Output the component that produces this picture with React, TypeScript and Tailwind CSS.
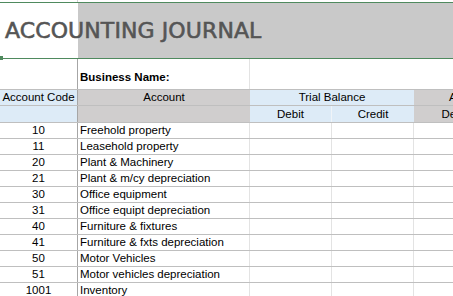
const accounts: [string, string][] = [
  ["10", "Freehold property"],
  ["11", "Leasehold property"],
  ["20", "Plant & Machinery"],
  ["21", "Plant & m/cy depreciation"],
  ["30", "Office equipment"],
  ["31", "Office equipt depreciation"],
  ["40", "Furniture & fixtures"],
  ["41", "Furniture & fxts depreciation"],
  ["50", "Motor Vehicles"],
  ["51", "Motor vehicles depreciation"],
  ["1001", "Inventory"],
  ["1002", "Accounts receivable"],
];

export default function App() {
  return (
    <div className="h-[296px] w-[453px] overflow-hidden bg-white text-[11.5px] text-black font-['Liberation_Sans',Arial,sans-serif]">
      <div className="w-[660px]">
        {/* row above the title */}
        <div className="flex h-[2px]">
          <div className="w-[78px] border-r border-[#d4d4d4]" />
        </div>

        {/* title */}
        <div className="flex h-[57px] border-y border-[#4f8a5e]">
          <div className="relative w-[78px] bg-white">
            <span className="absolute -bottom-[2px] -left-px h-[4px] w-[4px] bg-[#4f8a5e]" />
          </div>
          <div className="flex-1 bg-[#c9c9c9]" />
        </div>
        <div className="relative -mt-[57px] flex h-[57px] items-center pl-[5px]">
          <span className="font-['DejaVu_Sans',sans-serif] text-[22px] tracking-[0.1px] text-[#555555] [-webkit-text-stroke:0.6px_#555555]">
            ACCOUNTING JOURNAL
          </span>
        </div>

        {/* business name */}
        <div className="flex h-[31px] border-b border-[#bfbfbf]">
          <div className="w-[78px] border-r border-[#a6a6a6]" />
          <div className="flex w-[172px] items-end border-r border-[#e3e3e3] pb-[3px] pl-[2px] font-bold">
            Business Name:
          </div>
          <div className="flex-1" />
        </div>

        {/* header row 1 */}
        <div className="flex h-[16px] border-b border-[#bfbfbf] leading-[15px]">
          <div className="w-[78px] border-r border-[#a6a6a6] bg-[#ddebf7] text-center">Account Code</div>
          <div className="w-[172px] bg-[#d0cece] text-center">Account</div>
          <div className="w-[164px] bg-[#ddebf7] text-center">Trial Balance</div>
          <div className="w-[164px] bg-[#d0cece] pl-[35px]">Adjusted Trial Balance</div>
        </div>

        {/* header row 2 */}
        <div className="flex h-[17px] border-b border-[#bfbfbf] leading-[16px]">
          <div className="w-[78px] border-r border-[#a6a6a6] bg-[#ddebf7]" />
          <div className="w-[172px] bg-[#d0cece]" />
          <div className="w-[82px] border-r border-[#f0f4f8] bg-[#ddebf7] text-center">Debit</div>
          <div className="w-[82px] bg-[#ddebf7] text-center">Credit</div>
          <div className="w-[82px] bg-[#d0cece] text-center">Debit</div>
          <div className="w-[82px] bg-[#d0cece] text-center">Credit</div>
        </div>

        {/* accounts */}
        {accounts.map(([code, name]) => (
          <div key={code} className="flex h-[16px] border-b border-[#bfbfbf] leading-[15px]">
            <div className="w-[78px] border-r border-[#a6a6a6] text-center">{code}</div>
            <div className="w-[172px] border-r border-[#e3e3e3] pl-[2px]">{name}</div>
            <div className="w-[82px] border-r border-[#e3e3e3]" />
            <div className="w-[82px] border-r border-[#e3e3e3]" />
            <div className="w-[82px] border-r border-[#e3e3e3]" />
            <div className="w-[82px]" />
          </div>
        ))}
      </div>
    </div>
  );
}
